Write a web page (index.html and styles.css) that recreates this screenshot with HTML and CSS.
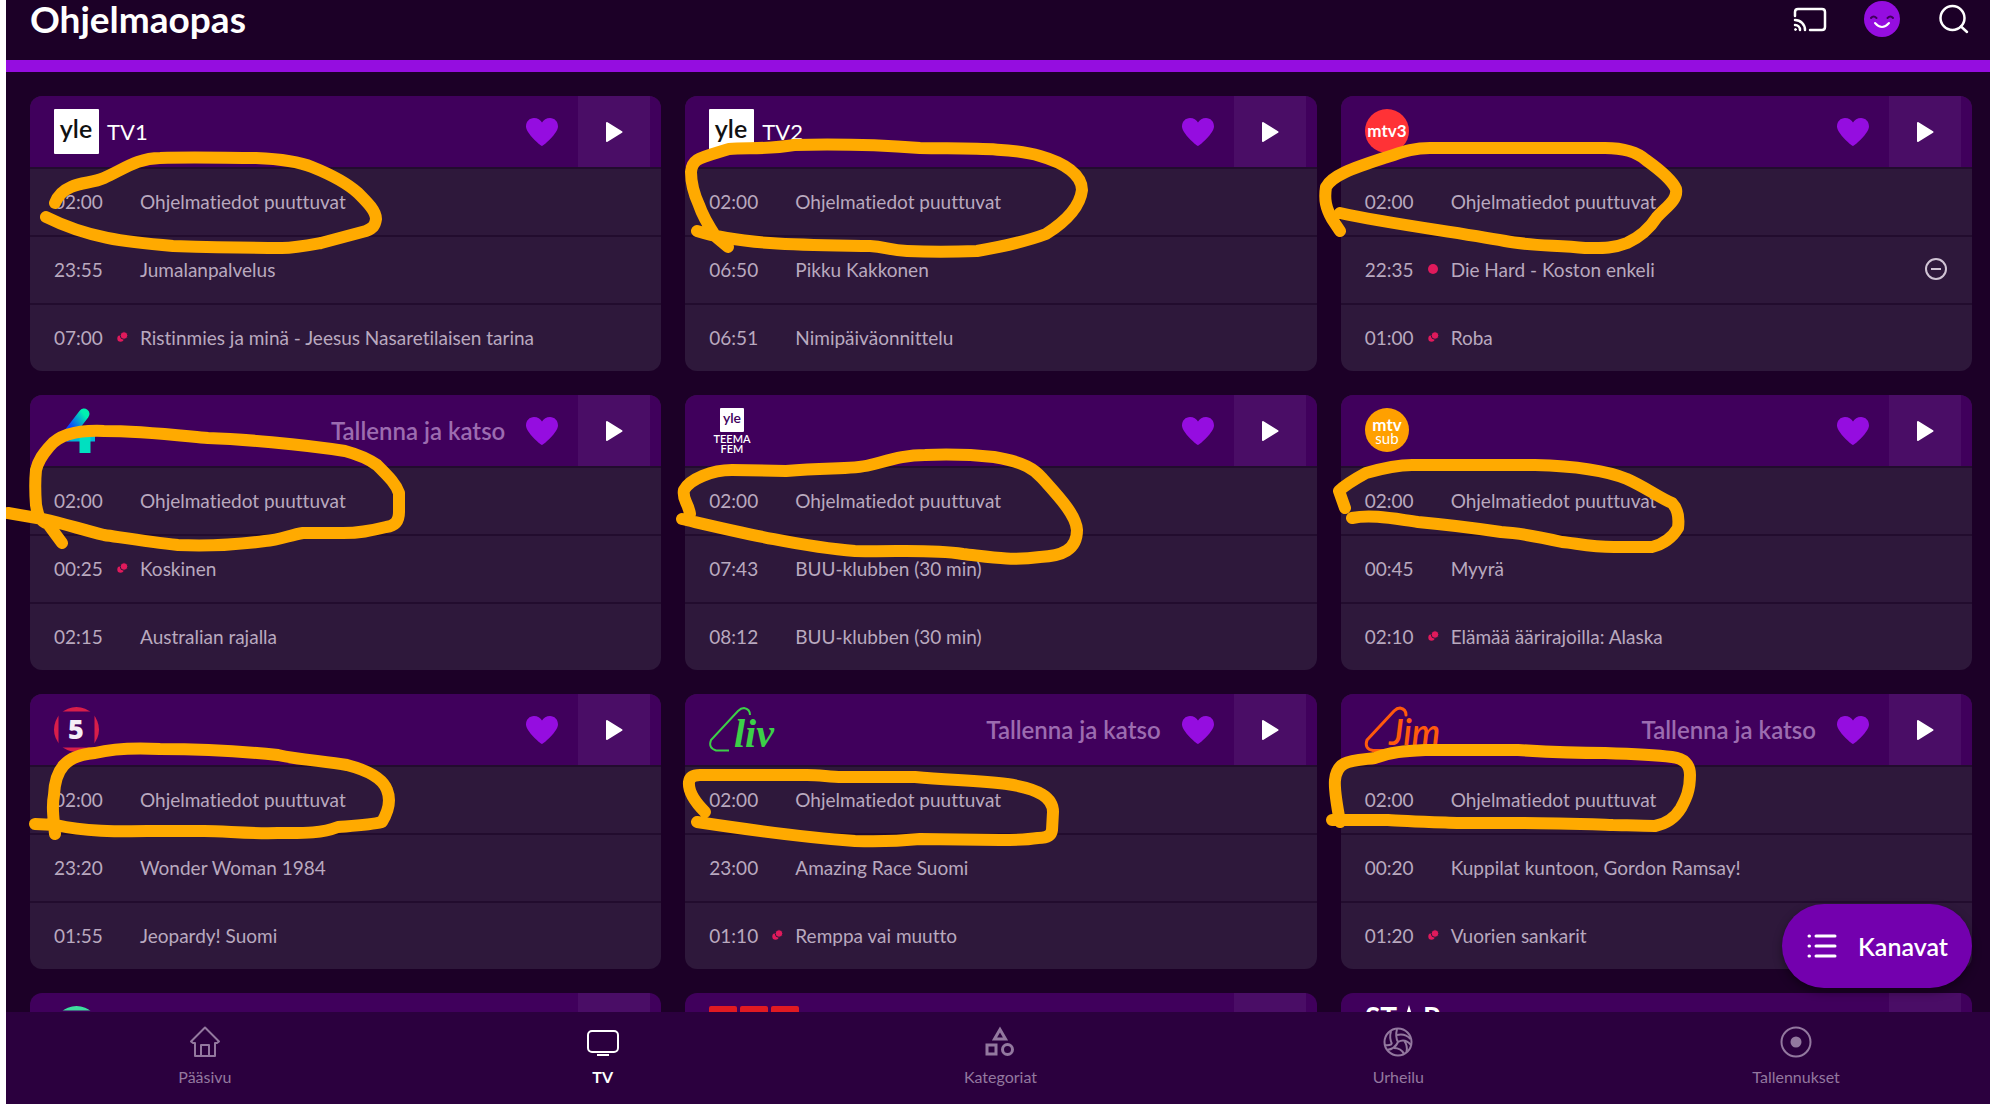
FILE: index.html
```html
<!DOCTYPE html>
<html lang="fi">

<head>
    <title>Ohjelmaopas</title>
    <meta charset="UTF-8">
    <meta name="viewport" content="width=device-width, initial-scale=1.0">
    <link rel="stylesheet" href="styles.css">
</head>

<body>
    <!-- shared icons -->
    <svg class="sprite" aria-hidden="true">
        <symbol id="heart" viewBox="0 0 34 30">
            <path d="M17 29C15 28.500 1 16 1 9.500C1 4.500 4.500 1 9 1C12.500 1 15.500 2.800 17 5.500C18.500 2.800 21.500 1 25 1C29.500 1 33 4.500 33 9.500C33 16 19 28.500 17 29Z" />
        </symbol>
        <symbol id="play" viewBox="0 0 20 22">
            <path d="M3 2L17.500 11L3 20Z" stroke="#fff" stroke-width="2" stroke-linejoin="round" />
        </symbol>
        <symbol id="rec" viewBox="0 0 12 12">
            <circle cx="6" cy="6" r="5" />
        </symbol>
        <symbol id="rec-series" viewBox="0 0 12 12">
            <circle cx="4.500" cy="7.500" r="3.200" />
            <circle cx="8" cy="4.500" r="3.800" stroke="#2e183b" stroke-width="1" />
        </symbol>
    </svg>

    <header class="topbar">
        <h1>Ohjelmaopas</h1>
        <div class="tools">
            <button aria-label="Chromecast">
                <svg viewBox="0 0 36 36" fill="none" stroke="#fff" stroke-width="2.500" stroke-linecap="round">
                    <path d="M3 15V11Q3 8 6 8H30Q33 8 33 11V26Q33 29 30 29H18" />
                    <path d="M3 19A10 10 0 0 1 13 29M3 24A5 5 0 0 1 8 29" />
                    <circle cx="3.500" cy="28.500" r="1" fill="#fff" stroke-width="1" />
                </svg>
            </button>
            <button aria-label="Profiili">
                <svg viewBox="0 0 36 36" fill="none" stroke-linecap="round">
                    <circle cx="18" cy="18" r="18" fill="#950de0" />
                    <path d="M7 17Q9.500 14 12.500 17M23.500 17Q26.500 14 29 17" stroke="#40005c" stroke-width="2" />
                    <path d="M11 22Q18 30 25 22" stroke="#fff" stroke-width="2" />
                </svg>
            </button>
            <button aria-label="Haku">
                <svg viewBox="0 0 36 36" fill="none" stroke="#fff" stroke-width="2.500" stroke-linecap="round">
                    <circle cx="16.500" cy="17" r="12" />
                    <path d="M25 25.500L31 31" />
                </svg>
            </button>
        </div>
    </header>

    <main class="guide">
        <section class="card">
            <div class="head">
                <svg class="logo" viewBox="0 0 45 45" width="45" height="45"><rect width="45" height="45" rx="1" fill="#fff" /><text x="22" y="29" class="yle">yle</text></svg>
                <span class="name">TV1</span>
                <button class="fav" aria-label="Suosikki"><svg><use href="#heart" /></svg></button>
                <button class="play" aria-label="Katso"><svg><use href="#play" /></svg></button>
            </div>
            <div class="row"><time>02:00</time><i></i><span>Ohjelmatiedot puuttuvat</span></div>
            <div class="row"><time>23:55</time><i></i><span>Jumalanpalvelus</span></div>
            <div class="row"><time>07:00</time><svg class="rec"><use href="#rec-series" /></svg><span>Ristinmies ja minä - Jeesus Nasaretilaisen tarina</span></div>
        </section>

        <section class="card">
            <div class="head">
                <svg class="logo" viewBox="0 0 45 45" width="45" height="45"><rect width="45" height="45" rx="1" fill="#fff" /><text x="22" y="29" class="yle">yle</text></svg>
                <span class="name">TV2</span>
                <button class="fav" aria-label="Suosikki"><svg><use href="#heart" /></svg></button>
                <button class="play" aria-label="Katso"><svg><use href="#play" /></svg></button>
            </div>
            <div class="row"><time>02:00</time><i></i><span>Ohjelmatiedot puuttuvat</span></div>
            <div class="row"><time>06:50</time><i></i><span>Pikku Kakkonen</span></div>
            <div class="row"><time>06:51</time><i></i><span>Nimipäiväonnittelu</span></div>
        </section>

        <section class="card">
            <div class="head">
                <svg class="logo" viewBox="0 0 45 45" width="45" height="45"><circle cx="22" cy="22" r="22" fill="#ff3236" /><text x="22" y="28" class="mtv">mtv3</text></svg>
                <button class="fav" aria-label="Suosikki"><svg><use href="#heart" /></svg></button>
                <button class="play" aria-label="Katso"><svg><use href="#play" /></svg></button>
            </div>
            <div class="row"><time>02:00</time><i></i><span>Ohjelmatiedot puuttuvat</span></div>
            <div class="row"><time>22:35</time><svg class="rec"><use href="#rec" /></svg><span>Die Hard - Koston enkeli</span>
                <button class="remove" aria-label="Poista tallennus"><svg viewBox="0 0 24 24"><circle cx="12" cy="12" r="10" /><path d="M7 12H17" /></svg></button>
            </div>
            <div class="row"><time>01:00</time><svg class="rec"><use href="#rec-series" /></svg><span>Roba</span></div>
        </section>

        <section class="card">
            <div class="head">
                <svg class="logo" viewBox="0 0 45 45" width="45" height="45">
                    <defs>
                        <linearGradient id="g4" x1="0" y1="1" x2="1" y2="0"><stop offset="0.300" stop-color="#0a40ff" /><stop offset="1" stop-color="#00f0b0" /></linearGradient>
                    </defs>
                    <path d="M13 29H41" stroke="#00b8d8" stroke-width="9" />
                    <path d="M31 19V45" stroke="#00e0c0" stroke-width="11" />
                    <path d="M30 6L13 28" stroke="url(#g4)" stroke-width="11" stroke-linecap="round" />
                </svg>
                <span class="note">Tallenna ja katso</span>
                <button class="fav" aria-label="Suosikki"><svg><use href="#heart" /></svg></button>
                <button class="play" aria-label="Katso"><svg><use href="#play" /></svg></button>
            </div>
            <div class="row"><time>02:00</time><i></i><span>Ohjelmatiedot puuttuvat</span></div>
            <div class="row"><time>00:25</time><svg class="rec"><use href="#rec-series" /></svg><span>Koskinen</span></div>
            <div class="row"><time>02:15</time><i></i><span>Australian rajalla</span></div>
        </section>

        <section class="card">
            <div class="head">
                <svg class="logo" viewBox="0 0 45 45" width="45" height="45"><rect x="11" width="24" height="24" rx="1" fill="#fff" /><text x="23" y="15" class="yle small">yle</text><text x="23" y="35" class="teema">TEEMA</text><text x="23" y="45" class="teema">FEM</text></svg>
                <button class="fav" aria-label="Suosikki"><svg><use href="#heart" /></svg></button>
                <button class="play" aria-label="Katso"><svg><use href="#play" /></svg></button>
            </div>
            <div class="row"><time>02:00</time><i></i><span>Ohjelmatiedot puuttuvat</span></div>
            <div class="row"><time>07:43</time><i></i><span>BUU-klubben (30 min)</span></div>
            <div class="row"><time>08:12</time><i></i><span>BUU-klubben (30 min)</span></div>
        </section>

        <section class="card">
            <div class="head">
                <svg class="logo" viewBox="0 0 45 45" width="45" height="45"><circle cx="22" cy="22" r="22" fill="#ffa000" /><text x="22" y="23" class="mtv">mtv</text><text x="22" y="36" class="mtv thin">sub</text></svg>
                <button class="fav" aria-label="Suosikki"><svg><use href="#heart" /></svg></button>
                <button class="play" aria-label="Katso"><svg><use href="#play" /></svg></button>
            </div>
            <div class="row"><time>02:00</time><i></i><span>Ohjelmatiedot puuttuvat</span></div>
            <div class="row"><time>00:45</time><i></i><span>Myyrä</span></div>
            <div class="row"><time>02:10</time><svg class="rec"><use href="#rec-series" /></svg><span>Elämää äärirajoilla: Alaska</span></div>
        </section>

        <section class="card">
            <div class="head">
                <svg class="logo" viewBox="0 0 45 45" width="45" height="45"><circle cx="22.500" cy="22.500" r="22.500" fill="#d81e4a" /><path d="M4.500 4.500H40.500V40.500H4.500Z" fill="#40005c" /><text x="22" y="32" class="five">5</text></svg>
                <button class="fav" aria-label="Suosikki"><svg><use href="#heart" /></svg></button>
                <button class="play" aria-label="Katso"><svg><use href="#play" /></svg></button>
            </div>
            <div class="row"><time>02:00</time><i></i><span>Ohjelmatiedot puuttuvat</span></div>
            <div class="row"><time>23:20</time><i></i><span>Wonder Woman 1984</span></div>
            <div class="row"><time>01:55</time><i></i><span>Jeopardy! Suomi</span></div>
        </section>

        <section class="card">
            <div class="head">
                <svg class="logo" viewBox="0 0 72 45" width="72" height="45"><path d="M20 43.500H7Q-1 41 2 33L29 4Q32 1 35 1Q41 2 41 8" fill="none" stroke="#3cd048" stroke-width="2" /><text x="25" y="40" class="liv">liv</text></svg>
                <span class="note">Tallenna ja katso</span>
                <button class="fav" aria-label="Suosikki"><svg><use href="#heart" /></svg></button>
                <button class="play" aria-label="Katso"><svg><use href="#play" /></svg></button>
            </div>
            <div class="row"><time>02:00</time><i></i><span>Ohjelmatiedot puuttuvat</span></div>
            <div class="row"><time>23:00</time><i></i><span>Amazing Race Suomi</span></div>
            <div class="row"><time>01:10</time><svg class="rec"><use href="#rec-series" /></svg><span>Remppa vai muutto</span></div>
        </section>

        <section class="card">
            <div class="head">
                <svg class="logo" viewBox="0 0 84 45" width="84" height="45"><path d="M30 43.500H8Q-1 42 2 33L29 4Q32 1 35 1Q41 2 41 8" fill="none" stroke="#ff5a0c" stroke-width="3" stroke-linecap="round" /><text x="24" y="38" class="jim">Jim</text></svg>
                <span class="note">Tallenna ja katso</span>
                <button class="fav" aria-label="Suosikki"><svg><use href="#heart" /></svg></button>
                <button class="play" aria-label="Katso"><svg><use href="#play" /></svg></button>
            </div>
            <div class="row"><time>02:00</time><i></i><span>Ohjelmatiedot puuttuvat</span></div>
            <div class="row"><time>00:20</time><i></i><span>Kuppilat kuntoon, Gordon Ramsay!</span></div>
            <div class="row"><time>01:20</time><svg class="rec"><use href="#rec-series" /></svg><span>Vuorien sankarit</span></div>
        </section>

        <section class="card">
            <div class="head">
                <svg class="logo" viewBox="0 0 45 45" width="45" height="45"><circle cx="22.500" cy="22.500" r="22.500" fill="#3fdc9f" /><path d="M4.500 4.500H40.500V40.500H4.500Z" fill="#40005c" /></svg>
                <button class="fav" aria-label="Suosikki"><svg><use href="#heart" /></svg></button>
                <button class="play" aria-label="Katso"><svg><use href="#play" /></svg></button>
            </div>
        </section>

        <section class="card">
            <div class="head">
                <svg class="logo" viewBox="0 0 90 45" width="90" height="45" fill="#e01a22"><rect width="28" height="45" rx="2" /><rect x="31" width="28" height="45" rx="2" /><rect x="62" width="28" height="45" rx="2" /></svg>
                <button class="fav" aria-label="Suosikki"><svg><use href="#heart" /></svg></button>
                <button class="play" aria-label="Katso"><svg><use href="#play" /></svg></button>
            </div>
        </section>

        <section class="card">
            <div class="head">
                <svg class="logo" viewBox="0 0 76 45" width="76" height="45"><text x="0" y="22" class="star">ST</text><path d="M44 -1L47 9L53 26L44 20L35 26L41 9Z" fill="#fff" /><text x="58" y="22" class="star">R</text></svg>
                <button class="fav" aria-label="Suosikki"><svg><use href="#heart" /></svg></button>
                <button class="play" aria-label="Katso"><svg><use href="#play" /></svg></button>
            </div>
        </section>
    </main>

    <nav class="tabs">
        <a href="#">
            <svg viewBox="0 0 36 36"><path d="M18 3.500L32 17.500L30 19H28V32H8V19H6L4 17.500ZM14 32V21H22V32" /></svg>
            Pääsivu
        </a>
        <a href="#" class="active">
            <svg viewBox="0 0 36 36"><rect x="3" y="7" width="30" height="21" rx="4" /><path d="M12 31H24" /></svg>
            TV
        </a>
        <a href="#">
            <svg viewBox="0 0 36 36" class="bold"><path d="M18 5.500L23.500 15H12.500ZM5 21H14V30H5Z" /><circle cx="25.500" cy="25.500" r="5" /></svg>
            Kategoriat
        </a>
        <a href="#">
            <svg viewBox="0 0 36 36"><circle cx="18" cy="18" r="13.500" /><path d="M17 5Q15 13 18 18Q25 14 31 21M18 18Q15 25 7 26M11 7Q9 14 12 20M12 20Q8 22 5 21M17 11Q25 9 30.500 15M24 16.500Q28 22 26.500 28M14 24Q21 24 24 30" /></svg>
            Urheilu
        </a>
        <a href="#">
            <svg viewBox="0 0 36 36"><circle cx="18" cy="18" r="14.500" /><circle cx="18" cy="18" r="5.500" class="dot" /></svg>
            Tallennukset
        </a>
    </nav>

    <button class="channels">
        <svg viewBox="0 0 32 28"><path d="M10 4H29M10 14H29M10 24H29M3 4H3.500M3 14H3.500M3 24H3.500" /></svg>
        Kanavat
    </button>

    <!-- marker strokes round the missing programme data -->
    <svg class="marker" viewBox="0 0 1990 1104" aria-hidden="true">
        <path d="M55 203C58 195 64 190 71 187C82 182 93 183 104 178C124 169 138 158 160 158C195 157 225 158 256 158C280 159 300 162 312 167C332 175 348 184 358 193C368 203 376 211 376 219C375 226 373 228 366 231L321 243C305 246 295 248 282 248C245 248 205 247 173 246C125 242 88 238 46 217" />
        <path d="M728 247L716 237C708 225 702 214 699 205C693 192 691 180 691 172C692 158 700 158 729 149C745 147 765 150 794 145C835 144 880 145 920 148C960 149 1010 147 1040 156C1065 163 1082 175 1082 190C1080 207 1065 222 1046 234C1025 242 1000 247 977 251C950 252 930 252 907 251C890 250 885 247 870 246C815 245 745 246 697 231" />
        <path d="M1340 231L1332 219C1326 208 1324 200 1326 187C1332 176 1350 169 1384 158C1398 154 1410 148 1430 148L1605 148C1625 148 1637 152 1646 160C1660 170 1672 180 1676 189C1678 200 1666 207 1657 217C1648 231 1638 238 1627 243C1612 249 1600 248 1585 248C1555 245 1530 246 1505 241C1450 231 1390 224 1340 213" />
        <path d="M62 543L48 524C38 520 38 514 36 505C35 492 35 480 36 470C39 458 45 452 50 446C60 434 80 430 104 431C140 431 175 435 208 438C240 439 300 444 345 451C360 455 370 460 377 465C390 478 396 484 399 493L399 512C399 522 394 526 386 527C370 531 360 533 343 533L303 533C290 535 280 540 265 541C235 545 200 546 178 545C150 542 125 538 104 535C80 529 65 524 43 519L8 513" />
        <path d="M690 514C688 502 682 500 684 490C690 479 712 470 732 470L786 471C830 467 850 470 870 465C890 460 905 455 925 455C950 454 975 455 994 457C1025 462 1035 470 1042 478C1060 498 1076 515 1077 530C1077 550 1062 556 1040 557C1010 561 990 557 963 554C930 549 900 552 855 551C800 547 730 530 682 519" />
        <path d="M1345 508L1339 491C1345 485 1355 479 1366 473C1380 469 1395 465 1412 465L1535 465C1575 466 1605 470 1627 479C1645 487 1660 498 1672 503C1679 510 1679 520 1678 528C1672 538 1664 544 1652 547L1614 547C1590 547 1575 543 1562 542C1540 537 1520 533 1501 532C1460 526 1440 524 1418 522C1395 519 1372 514 1352 518" />
        <path d="M55 834C53 815 52 805 54 795C55 770 65 755 95 753C115 748 140 748 160 749C200 749 240 751 278 755C300 760 325 761 347 765C370 771 383 779 387 790C391 800 388 812 382 822C370 825 350 826 338 827C320 834 300 833 278 833C250 834 225 831 204 831L165 831C130 831 90 833 56 825L35 824" />
        <path d="M705 812C695 802 688 792 689 782Q690 775 700 775L807 775C820 775 830 777 842 777L915 777C950 780 980 781 1007 784C1040 789 1053 798 1053 812L1052 830Q1051 838 1038 838C1025 840 1015 840 1000 840L920 839C900 841 880 842 855 841C800 837 750 830 697 822" />
        <path d="M1340 822C1337 806 1334 790 1335 780C1337 760 1350 761 1375 758C1390 752 1405 751 1425 750L1518 750C1550 752 1580 753 1605 753C1635 754 1655 755 1672 757Q1690 759 1690 775C1690 792 1685 800 1681 808C1675 818 1665 824 1655 826C1640 826 1620 825 1613 825C1580 824 1550 823 1518 823L1457 823C1430 822 1400 821 1388 820L1332 820" />
    </svg>
</body>

</html>
```
FILE: styles.css
```css
* {
    box-sizing: border-box;
}

body {
    margin: 0;
    height: 100vh;
    display: flex;
    flex-direction: column;
    position: relative;
    overflow: hidden;
    border-left: 6px solid #fff;
    background-color: #1c0027;
    color: #fff;
    font-family: Lato, "Noto Sans", sans-serif;
    font-size: 19px;
    font-variant-ligatures: none;
}

button {
    padding: 0;
    border: 0;
    background: none;
    color: inherit;
    font: inherit;
    cursor: pointer;
}

svg {
    display: block;
}

.sprite {
    position: absolute;
    width: 0;
    height: 0;
}

.topbar {
    display: flex;
    justify-content: space-between;
    align-items: flex-start;
    height: 72px;
    flex-shrink: 0;
    padding: 0 18px 0 24px;
    border-bottom: 12px solid #950de0;
}

h1 {
    margin: 0;
    font-size: 37px;
    line-height: 38px;
}

.tools {
    display: flex;
    gap: 36px;
    padding-top: 1px;
}

.tools svg {
    width: 36px;
    height: 36px;
}

.guide {
    flex: 1;
    min-height: 0;
    overflow: hidden;
    display: grid;
    grid-template-columns: repeat(3, 1fr);
    grid-auto-rows: min-content;
    gap: 24px;
    padding: 24px 18px 0 24px;
}

.card {
    border-radius: 12px;
    overflow: hidden;
    background-color: #2e183b;
}

.head {
    display: flex;
    align-items: center;
    height: 71px;
    padding: 0 11px 0 24px;
    background-color: #40005c;
}

.name {
    margin-left: 8px;
    font-size: 22px;
}

.note {
    margin-left: auto;
    font-size: 24px;
    font-weight: 600;
    color: #9c6cb0;
}

.fav {
    margin: 0 19px 0 auto;
}

.note + .fav {
    margin-left: 20px;
}

.fav svg {
    width: 34px;
    height: 30px;
    fill: #950de0;
}

.play {
    display: flex;
    align-items: center;
    justify-content: center;
    width: 72px;
    height: 100%;
    background-color: #4a0d66;
}

.play svg {
    width: 20px;
    height: 22px;
    fill: #fff;
}

.row {
    display: grid;
    grid-template-columns: 50px 24px 1fr auto;
    column-gap: 6px;
    align-items: center;
    height: 68px;
    padding: 0 24px 2px;
    border-top: 2px solid #220c2e;
    color: #b9a9bf;
}

.rec {
    width: 12px;
    height: 12px;
    margin: auto;
    fill: #e01a5c;
}

.remove svg {
    width: 24px;
    height: 24px;
    fill: none;
    stroke: #d0c4d4;
    stroke-width: 2;
}

/* channel logos */
.logo {
    overflow: visible;
}

.logo text {
    text-anchor: middle;
}

.logo .yle {
    font-size: 25px;
    font-weight: 600;
    fill: #111;
}

.logo .small {
    font-size: 14px;
    fill: #40005c;
}

.logo .teema {
    font-size: 11px;
    font-weight: 600;
    fill: #fff;
}

.logo .mtv {
    font-size: 17px;
    font-weight: 700;
    fill: #fff;
}

.logo .thin {
    font-size: 15px;
    font-weight: 400;
}

.logo .five {
    font-family: "Open Sans", sans-serif;
    font-size: 27px;
    font-weight: 800;
    fill: #f4eef6;
}

.logo .liv {
    font: italic bold 40px "Liberation Serif", serif;
    text-anchor: start;
    fill: #3cd048;
}

.logo .jim {
    font-size: 36px;
    font-style: italic;
    font-weight: 600;
    text-anchor: start;
    fill: #ff5a0c;
}

.logo .star {
    font-size: 28px;
    font-weight: 700;
    text-anchor: start;
    fill: #fff;
}

.tabs {
    display: grid;
    grid-template-columns: repeat(5, 1fr);
    height: 92px;
    flex-shrink: 0;
    margin-right: -5px;
    background-color: #2b003e;
}

.tabs a {
    display: flex;
    flex-direction: column;
    align-items: center;
    gap: 7px;
    padding-top: 12px;
    color: #93789f;
    font-size: 16px;
    line-height: 20px;
    text-decoration: none;
}

.tabs svg {
    width: 36px;
    height: 36px;
    fill: none;
    stroke: currentColor;
    stroke-width: 2;
    stroke-linejoin: round;
}

.tabs .bold {
    stroke-width: 3;
    stroke-linejoin: miter;
}

.tabs .dot {
    fill: currentColor;
    stroke: none;
}

.tabs .active {
    color: #fff;
    font-weight: 700;
}

.channels {
    position: absolute;
    right: 18px;
    bottom: 116px;
    display: flex;
    align-items: center;
    gap: 20px;
    height: 84px;
    padding: 0 24px;
    border-radius: 42px;
    background-color: #7300ae;
    box-shadow: 0 4px 10px rgba(0, 0, 0, 0.4);
    font-size: 25px;
    font-weight: 600;
}

.channels svg {
    width: 32px;
    height: 28px;
    fill: none;
    stroke: #fff;
    stroke-width: 3;
    stroke-linecap: round;
}

/* starts at the window edge, over the white border */
.marker {
    position: absolute;
    top: 0;
    left: -6px;
    width: 100vw;
    fill: none;
    stroke: #ffaa00;
    stroke-width: 12;
    stroke-linecap: round;
    stroke-linejoin: round;
    pointer-events: none;
}
```
